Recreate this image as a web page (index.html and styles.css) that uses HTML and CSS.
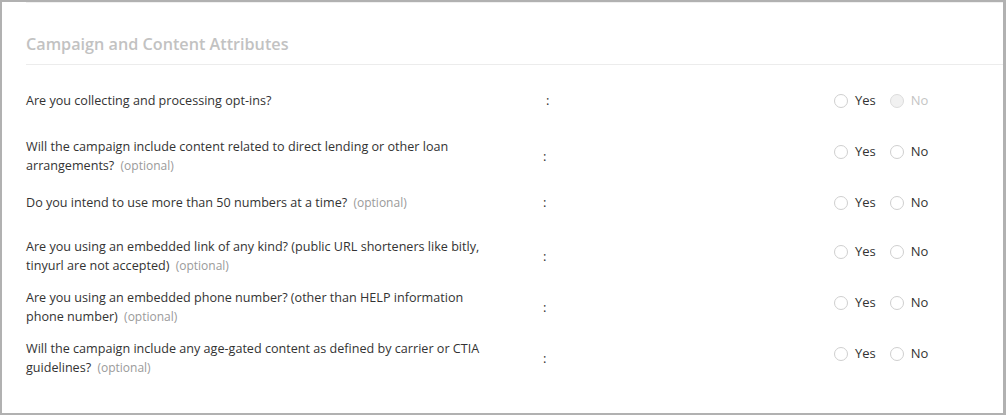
FILE: index.html
```html
<!DOCTYPE html>
<html>
<head>
<meta charset="utf-8">
<link rel="stylesheet" href="styles.css">
</head>
<body>
<div class="frame">
  <div class="top-rule"></div>
  <h2 class="section-title">Campaign and Content Attributes</h2>
  <div class="rows">
    <div class="row single gap-27">
      <div class="label">Are you collecting and processing opt-ins?</div>
      <div class="colon colon-wide">:</div>
      <div class="radios">
        <label class="opt"><span class="dot"></span>Yes</label>
        <label class="opt disabled"><span class="dot"></span>No</label>
      </div>
    </div>
    <div class="row double gap-18">
      <div class="label">Will the campaign include content related to direct lending or other loan arrangements? <span class="optional">(optional)</span></div>
      <div class="colon">:</div>
      <div class="radios">
        <label class="opt"><span class="dot"></span>Yes</label>
        <label class="opt"><span class="dot"></span>No</label>
      </div>
    </div>
    <div class="row single gap-25">
      <div class="label">Do you intend to use more than 50 numbers at a time? <span class="optional">(optional)</span></div>
      <div class="colon">:</div>
      <div class="radios">
        <label class="opt"><span class="dot"></span>Yes</label>
        <label class="opt"><span class="dot"></span>No</label>
      </div>
    </div>
    <div class="row double gap-13">
      <div class="label">Are you using an embedded link of any kind? (public URL shorteners like bitly, tinyurl are not accepted) <span class="optional">(optional)</span></div>
      <div class="colon">:</div>
      <div class="radios">
        <label class="opt"><span class="dot"></span>Yes</label>
        <label class="opt"><span class="dot"></span>No</label>
      </div>
    </div>
    <div class="row double gap-13">
      <div class="label">Are you using an embedded phone number? (other than HELP information phone number) <span class="optional">(optional)</span></div>
      <div class="colon">:</div>
      <div class="radios">
        <label class="opt"><span class="dot"></span>Yes</label>
        <label class="opt"><span class="dot"></span>No</label>
      </div>
    </div>
    <div class="row double">
      <div class="label">Will the campaign include any age-gated content as defined by carrier or CTIA guidelines? <span class="optional">(optional)</span></div>
      <div class="colon">:</div>
      <div class="radios">
        <label class="opt"><span class="dot"></span>Yes</label>
        <label class="opt"><span class="dot"></span>No</label>
      </div>
    </div>
  </div>
</div>
</body>
</html>
```

FILE: styles.css
```css
* { box-sizing: border-box; }
html, body { margin: 0; padding: 0; background: #fff; }
body {
  font-family: "Open Sans", "Liberation Sans", sans-serif;
  color: #333;
  font-size: 13px;
}
.frame {
  width: 1006px;
  height: 415px;
  border: 2px solid #b1b1b1;
  border-right-width: 3px;
  padding-left: 24px;
  overflow: hidden;
}
.top-rule {
  height: 1px;
  background: #f0f0f0;
}
.section-title {
  margin: 30px 0 0 0;
  font-size: 16.2px;
  line-height: 22px;
  font-weight: 600;
  color: #c2c2c2;
  padding-bottom: 9px;
  border-bottom: 1px solid #ececec;
}
.rows {
  padding-top: 26px;
}
.row {
  display: grid;
  grid-template-columns: 485px 323px auto;
  line-height: 19px;
}
.gap-27 { margin-bottom: 27px; }
.gap-25 { margin-bottom: 25px; }
.gap-18 { margin-bottom: 18px; }
.gap-13 { margin-bottom: 13px; }
.label {
  color: #333;
  font-size: 12.6px;
  padding-right: 15px;
}
.optional {
  color: #9a9a9a;
  font-size: 12px;
  line-height: 19px;
  margin-left: 3px;
}
.colon {
  align-self: center;
  padding-left: 32px;
  color: #333;
}
.colon-wide { padding-left: 35px; }
.radios {
  display: flex;
  align-items: center;
  height: 19px;
}
.row.double .radios { margin-top: 5px; }
.opt {
  display: flex;
  align-items: center;
  color: #333;
  margin-right: 14px;
}
.dot {
  width: 14px;
  height: 14px;
  border: 1px solid #cfcfcf;
  border-radius: 50%;
  background: #fff;
  margin-right: 7px;
}
.opt.disabled { color: #c4c4c4; }
.opt.disabled .dot {
  background: #f1f1f1;
  border-color: #dcdcdc;
}
```
